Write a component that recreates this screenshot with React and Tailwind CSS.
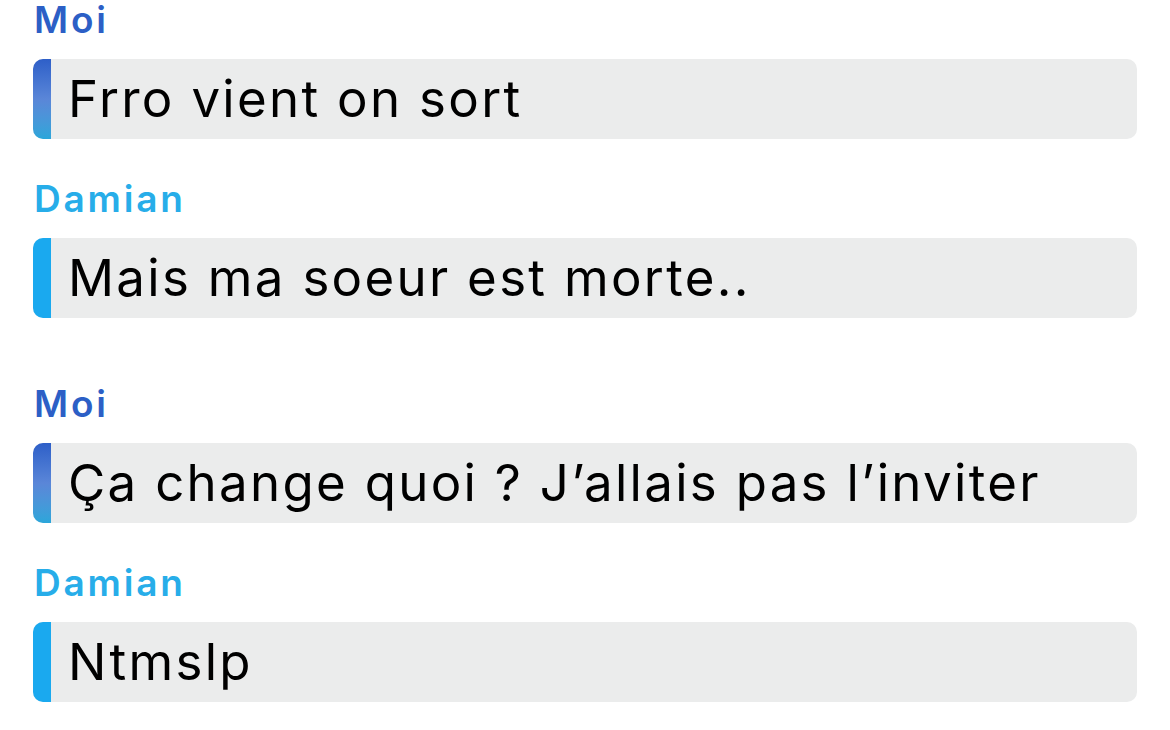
const messages = [
  { from: 'Moi', text: 'Frro vient on sort' },
  { from: 'Damian', text: 'Mais ma soeur est morte..' },
  { from: 'Moi', text: 'Ça change quoi ? J’allais pas l’inviter', gap: true },
  { from: 'Damian', text: 'Ntmslp' },
];

function Message({ from, text, gap }) {
  const isMe = from === 'Moi';
  return (
    <div className={gap ? 'mt-[66px]' : 'mt-[40px] first:mt-0'}>
      <div
        className={`pl-[1px] text-[37px] leading-[40px] font-semibold tracking-[2.8px] ${
          isMe ? 'text-[#2c5fc6]' : 'text-[#27ade9]'
        }`}
      >
        {from}
      </div>
      <div className="mt-[19px] flex h-[80px] items-stretch overflow-hidden rounded-[10px] bg-[#ebecec]">
        <div
          className={`w-[18px] shrink-0 rounded-l-[6px] ${
            isMe ? 'bg-gradient-to-b from-[#2e5fc8] via-[#5a86d8] to-[#2aa6da]' : 'bg-[#1aa9ef]'
          }`}
        />
        <div className="flex items-center pl-[17px] text-[51px] tracking-[2.3px] text-black">{text}</div>
      </div>
    </div>
  );
}

export default function App() {
  return (
    <div
      className="min-h-[730px] w-[1170px] bg-white pl-[33px] pr-[33px]"
      style={{ fontFamily: 'Inter, "Noto Sans", sans-serif' }}
    >
      <div className="flex flex-col">
        {messages.map((m, i) => (
          <Message key={i} {...m} />
        ))}
      </div>
    </div>
  );
}
